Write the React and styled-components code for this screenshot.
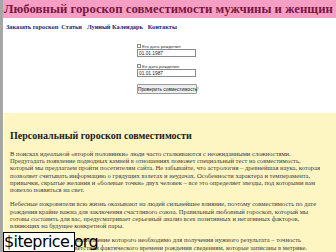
import styled, { createGlobalStyle } from "styled-components";

const Global = createGlobalStyle`
  html, body {
    margin: 0;
    padding: 0;
    background: #ffffff;
    overflow: hidden;
  }
  body {
    font-family: "Liberation Serif", "Times New Roman", serif;
  }
`;

const Page = styled.div`
  width: 336px;
  height: 252px;
  border-left: 3px solid #a6a6a6;
  box-sizing: border-box;
  position: relative;
  overflow: hidden;
`;

const Header = styled.div`
  height: 18px;
  background: #f49fc3;
  white-space: nowrap;
  overflow: hidden;
`;

const Title = styled.h1`
  margin: 0;
  padding-left: 1px;
  font-size: 12.8px;
  line-height: 18px;
  font-weight: bold;
  color: #7c1640;
`;

const Nav = styled.nav`
  display: flex;
  gap: 3px;
  padding: 5px 0 0 3px;
  font-size: 6.3px;
  font-weight: bold;
`;

const NavLink = styled.a`
  color: #1b1b7a;
  text-decoration: none;
  margin-right: ${(p) => (p.$wide ? "2px" : "0")};
`;

const Form = styled.form`
  display: flex;
  flex-direction: column;
  align-items: flex-start;
  margin: 13px 0 0 134px;
  width: 62px;
`;

const CheckRow = styled.label`
  display: flex;
  align-items: center;
  gap: 1px;
  font-family: "Liberation Sans", Arial, sans-serif;
  font-size: 4.4px;
  color: #333;
  height: 6px;
`;

const Check = styled.input`
  appearance: none;
  margin: 0;
  width: 4px;
  height: 4px;
  border: 1px solid #8a8a8a;
  background: #fff;
  box-sizing: border-box;
`;

const DateInput = styled.input`
  width: 59px;
  height: 8px;
  box-sizing: border-box;
  margin: 0 0 6px 0;
  padding: 0 1px;
  border: 1px solid #8a8a8a;
  font-family: "Liberation Sans", Arial, sans-serif;
  font-size: 4.8px;
  color: #222;
  outline: none;
`;

const Submit = styled.button`
  margin-top: 1px;
  height: 10px;
  width: 60px;
  padding: 0;
  border: 1px solid #9a9a9a;
  border-radius: 1px;
  background: #efefef;
  font-family: "Liberation Sans", Arial, sans-serif;
  font-size: 4.8px;
  color: #222;
  white-space: nowrap;
`;

const Content = styled.section`
  margin: 19px 0 0 1px;
  background: #fdf6c3;
  padding: 17px 14px 20px 6px;
  height: 200px;
`;

const Heading = styled.h2`
  margin: 0 0 8px 0;
  font-size: 10px;
  line-height: 12px;
  font-weight: bold;
  color: #1b1b1b;
`;

const Para = styled.p`
  margin: 0 0 7.2px 0;
  font-size: 6.55px;
  line-height: 7.2px;
  color: #3a3a3a;
`;

const Badge = styled.div`
  position: absolute;
  left: 0;
  bottom: 0;
  width: 72px;
  height: 20px;
  box-sizing: border-box;
  background: #ffffff;
  border: 1px solid #000;
  font-family: "DejaVu Sans", sans-serif;
  font-size: 16px;
  line-height: 18px;
  color: #000;
  text-align: center;
  letter-spacing: -0.6px;
`;

export default function App() {
  return (
    <>
      <Global />
      <Page>
        <Header>
          <Title>Любовный гороскоп совместимости мужчины и женщин</Title>
        </Header>
        <Nav>
          <NavLink href="#">Заказать гороскоп</NavLink>
          <NavLink href="#" $wide>
            Статьи
          </NavLink>
          <NavLink href="#" $wide>
            Лунный Календарь
          </NavLink>
          <NavLink href="#">Контакты</NavLink>
        </Nav>
        <Form onSubmit={(e) => e.preventDefault()}>
          <CheckRow>
            <Check type="checkbox" />
            Его дата рождения
          </CheckRow>
          <DateInput defaultValue="01.01.1987" />
          <CheckRow>
            <Check type="checkbox" />
            Ее дата рождения
          </CheckRow>
          <DateInput defaultValue="01.01.1987" />
          <Submit type="submit">Проверить совместимость!</Submit>
        </Form>
        <Content>
          <Heading>Персональный гороскоп совместимости</Heading>
          <Para>
            В поисках идеальной «второй половинки» люди часто сталкиваются с
            неожиданными сложностями. Предугадать появление подводных камней в
            отношениях поможет специальный тест на совместимость, который мы
            предлагаем пройти посетителям сайта. Не забывайте, что астрология –
            древнейшая наука, которая позволяет считывать информацию о грядущих
            взлетах и неудачах. Особенности характера и темперамента, привычки,
            скрытые желания и «болевые точки» двух человек – все это определяет
            звезды, под которыми вам повезло появиться на свет.
          </Para>
          <Para>
            Небесные покровители всю жизнь оказывают на людей сильнейшее
            влияние, поэтому совместимость по дате рождения крайне важна для
            заключения счастливого союза. Правильный любовный гороскоп, который
            мы готовы составить для вас, предусматривает серьезный анализ всех
            позитивных и негативных факторов, влияющих на будущее конкретной
            пары.
          </Para>
          <Para>
            Единственное условие, выполнение которого необходимо для получения
            нужного результата – точность данных в анкете и соответствия
            фактического времени рождения сведениям, которые записаны в метрике.
          </Para>
        </Content>
        <Badge>$iteprice.org</Badge>
      </Page>
    </>
  );
}
